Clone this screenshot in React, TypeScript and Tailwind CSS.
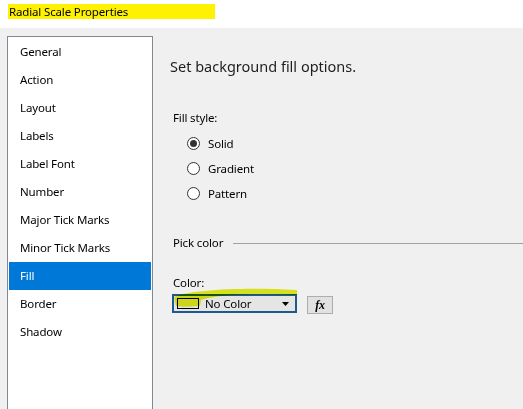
import React from 'react';

// Left nav pages
const pages = [
  'General',
  'Action',
  'Layout',
  'Labels',
  'Label Font',
  'Number',
  'Major Tick Marks',
  'Minor Tick Marks',
  'Fill',
  'Border',
  'Shadow',
];

const Radio: React.FC<{ label: string; checked?: boolean }> = ({ label, checked }) => (
  <div className="flex items-center h-[25px]">
    <span className="w-[13px] h-[13px] rounded-full border border-[#333] bg-white flex items-center justify-center">
      {checked && <span className="w-[7px] h-[7px] rounded-full bg-[#333]"></span>}
    </span>
    <span className="ml-[8px] text-[11.5px] text-black">{label}</span>
  </div>
);

const App: React.FC = () => {
  return (
    <div
      className="w-[523px] h-[409px] overflow-hidden bg-[#f0f0f0] flex flex-col relative tracking-[-0.15px]"
      style={{ fontFamily: '"Segoe UI", "Noto Sans", sans-serif' }}
    >
      {/* Title bar */}
      <div className="h-[28px] bg-white flex items-start shrink-0">
        <div className="mt-[4px] ml-[8px] w-[207px] h-[15px] bg-[#fff200] flex items-center">
          <span className="ml-[1px] text-[11.5px] text-black leading-none">Radial Scale Properties</span>
        </div>
      </div>

      <div className="flex flex-1 min-h-0">
        {/* Page list */}
        <div className="ml-[7px] mt-[8px] w-[146px] border border-[#828790] border-b-0 bg-white pt-[1px] px-[1px]">
          {pages.map((p) => (
            <div
              key={p}
              className={
                p === 'Fill'
                  ? 'h-[28px] flex items-center pl-[11px] text-[11.5px] bg-[#0078d7] text-white'
                  : 'h-[28px] flex items-center pl-[11px] text-[11.5px] text-black'
              }
            >
              {p}
            </div>
          ))}
        </div>

        {/* Fill page */}
        <div className="flex-1 flex flex-col pl-[17px]">
          <div className="mt-[27px] text-[14.5px] tracking-normal text-[#1e1e1e] leading-[22px]">
            Set background fill options.
          </div>

          <div className="mt-[33px] ml-[3px] text-[11.5px] text-black leading-[16px]">Fill style:</div>
          <div className="mt-[5px] ml-[17px] flex flex-col">
            <Radio label="Solid" checked />
            <Radio label="Gradient" />
            <Radio label="Pattern" />
          </div>

          <div className="mt-[29px] ml-[3px] flex items-center">
            <span className="text-[11.5px] text-black leading-[16px]">Pick color</span>
            <span className="ml-[10px] flex-1 h-px bg-[#a0a0a0]"></span>
          </div>

          <div className="mt-[24px] ml-[3px] text-[11.5px] text-black leading-[16px]">Color:</div>
          <div className="mt-[3px] ml-[2px] flex items-start">
            <div className="w-[125px] h-[19px] border-2 border-[#1c5a92] bg-[#e5e5e5] flex items-center relative">
              <span className="ml-[3px] w-[22px] h-[11px] border border-black"></span>
              <span className="ml-[6px] text-[11.5px] text-black">No Color</span>
              <svg className="absolute right-[6px] top-[6px]" width="7" height="4" viewBox="0 0 7 4">
                <path d="M0 0 H7 L3.5 4 Z" fill="#000" />
              </svg>
            </div>
            <div className="ml-[10px] mt-[2px] w-[26px] h-[18px] border border-[#adadad] bg-[#e1e1e1] flex items-center justify-center">
              <span className="text-[12px] font-bold italic" style={{ fontFamily: '"Liberation Serif", serif' }}>
                fx
              </span>
            </div>
          </div>
        </div>
      </div>

      {/* highlighter stroke over the colour dropdown */}
      <svg className="absolute left-0 top-0 pointer-events-none mix-blend-multiply" width="523" height="409">
        <path
          d="M174 297 C 190 290, 240 287, 297 290 L 297 295 C 250 293, 215 295, 201 300 L 200 306 C 190 307, 180 307, 176 306 Z"
          fill="#e4ee1e"
        />
      </svg>
    </div>
  );
};

export default App;
